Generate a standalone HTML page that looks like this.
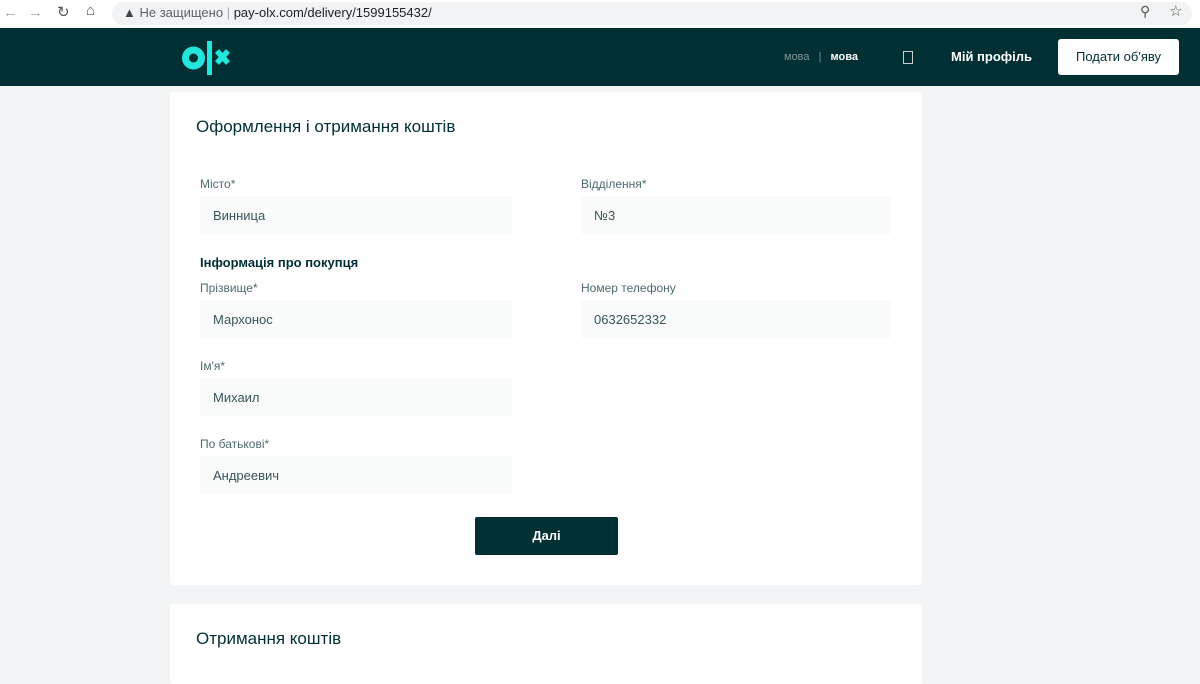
<!DOCTYPE html>
<html><head><meta charset="utf-8"><style>
*{margin:0;padding:0;box-sizing:border-box}
body{width:1200px;height:670px;overflow:hidden;background:#f2f4f5;font-family:"Liberation Sans",sans-serif;position:relative}
.a{position:absolute}
.bar{left:0;top:0;width:1200px;height:27px;background:#fff}
.url{left:112px;top:2px;width:1080px;height:23px;background:#f1f3f4;border-radius:12px}
.hdr{left:0;top:28px;width:1200px;height:58px;background:#002f34}
.card{background:#fff;border-radius:4px}
.lbl{font-size:12px;color:#4d6a6d}
.inp{width:312px;height:38px;background:#f9fafa;font-size:13px;color:#3a5558;padding:12px 0 0 13px}
</style></head><body>
<div class="a bar"></div>
<div class="a" style="left:3px;top:4px;font-size:15px;color:#aaa">←</div>
<div class="a" style="left:28px;top:4px;font-size:15px;color:#aaa">→</div>
<div class="a" style="left:57px;top:3px;font-size:15px;color:#555">↻</div>
<div class="a" style="left:86px;top:2px;font-size:15px;color:#555">⌂</div>
<div class="a url"></div>
<div class="a" style="left:123px;top:5px;font-size:13px;color:#444">▲ <span style="color:#5f6368">Не защищено</span> <span style="color:#aaa">|</span> <span style="color:#202124">pay-olx.com/delivery/1599155432/</span></div>
<div class="a" style="left:1140px;top:3px;font-size:14px;color:#555">⚲</div>
<div class="a" style="left:1169px;top:2px;font-size:15px;color:#555">☆</div>
<div class="a hdr"></div>
<svg class="a" style="left:182px;top:40px" width="60" height="36" viewBox="0 0 60 36">
<circle cx="11.5" cy="18" r="8" fill="none" stroke="#23e5db" stroke-width="7"/>
<rect x="25" y="1" width="5" height="34" fill="#23e5db"/>
<path d="M35 11 L46 23 M46 11 L35 23" stroke="#23e5db" stroke-width="5.5"/>
</svg>
<div class="a" style="left:784px;top:51px;font-size:11px;color:#7f9799">мова <span style="margin:0 6px">|</span> <b style="color:#fff">мова</b></div>
<div class="a" style="left:903px;top:51px;width:10px;height:13px;border:1px solid #ccc"></div>
<div class="a" style="left:951px;top:49px;font-size:13px;font-weight:bold;color:#fff">Мій профіль</div>
<div class="a" style="left:1058px;top:39px;width:121px;height:36px;background:#fff;border-radius:3px;font-size:13px;color:#002f34;text-align:center;line-height:36px">Подати об'яву</div>
<div class="a card" style="left:170px;top:92px;width:752px;height:493px"></div>
<div class="a" style="left:196px;top:117px;font-size:17px;color:#002f34">Оформлення і отримання коштів</div>
<div class="a lbl" style="left:200px;top:177px">Місто*</div>
<div class="a inp" style="left:200px;top:196px">Винница</div>
<div class="a lbl" style="left:581px;top:177px">Відділення*</div>
<div class="a inp" style="left:581px;top:196px;width:310px">№3</div>
<div class="a" style="left:200px;top:255px;font-size:13px;font-weight:bold;color:#002f34">Інформація про покупця</div>
<div class="a lbl" style="left:200px;top:281px">Прізвище*</div>
<div class="a inp" style="left:200px;top:300px">Мархонос</div>
<div class="a lbl" style="left:581px;top:281px">Номер телефону</div>
<div class="a inp" style="left:581px;top:300px;width:310px">0632652332</div>
<div class="a lbl" style="left:200px;top:359px">Ім'я*</div>
<div class="a inp" style="left:200px;top:378px">Михаил</div>
<div class="a lbl" style="left:200px;top:437px">По батькові*</div>
<div class="a inp" style="left:200px;top:456px">Андреевич</div>
<div class="a" style="left:475px;top:517px;width:143px;height:38px;background:#002f34;border-radius:2px;color:#fff;font-size:13px;font-weight:bold;text-align:center;line-height:38px">Далі</div>
<div class="a card" style="left:170px;top:604px;width:752px;height:80px"></div>
<div class="a" style="left:196px;top:629px;font-size:17px;color:#002f34">Отримання коштів</div>
</body></html>
